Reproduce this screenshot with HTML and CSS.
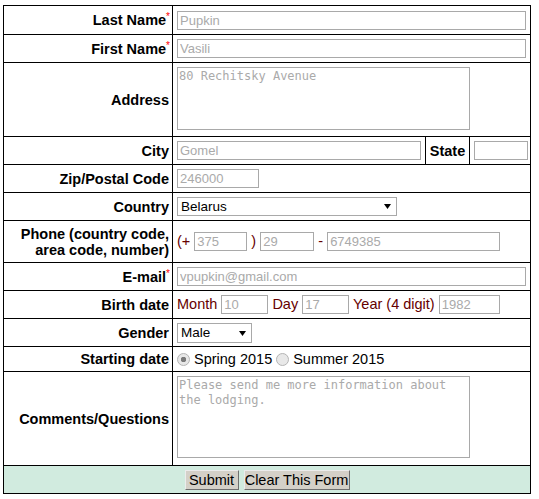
FILE: index.html
```html
<!DOCTYPE html>
<html>
<head>
<meta charset="utf-8">
<title>Registration form</title>
<link rel="stylesheet" href="styles.css">
</head>
<body>
<form class="form">
  <div class="row h29">
    <div class="lab"><span>Last Name<sup class="req">*</sup></span></div>
    <div class="val"><input class="txt w-full" placeholder="Pupkin"></div>
  </div>
  <div class="row h28">
    <div class="lab"><span>First Name<sup class="req">*</sup></span></div>
    <div class="val"><input class="txt w-full" placeholder="Vasili"></div>
  </div>
  <div class="row h74">
    <div class="lab"><span>Address</span></div>
    <div class="val top"><textarea class="area area-addr" placeholder="80 Rechitsky Avenue"></textarea></div>
  </div>
  <div class="row city h28">
    <div class="lab"><span>City</span></div>
    <div class="val cell-r"><input class="txt w-city" placeholder="Gomel"></div>
    <div class="state-lab cell-r">State</div>
    <div class="val state-val"><input class="txt w-state"></div>
  </div>
  <div class="row h28">
    <div class="lab"><span>Zip/Postal Code</span></div>
    <div class="val"><input class="txt w-zip" placeholder="246000"></div>
  </div>
  <div class="row h28">
    <div class="lab"><span>Country</span></div>
    <div class="val">
      <span class="sel w-country">
        <select><option>Belarus</option></select>
        <svg class="arrow" width="7" height="5" viewBox="0 0 7 5"><polygon points="0,0 7,0 3.5,5" fill="#000"/></svg>
      </span>
    </div>
  </div>
  <div class="row h42">
    <div class="lab"><span>Phone (country code,<br>area code, number)</span></div>
    <div class="val"><div class="line"><span class="mr">(+</span> <input class="txt w-cc" placeholder="375"> <span class="mr">)</span> <input class="txt w-ac" placeholder="29"> <span class="mr">-</span> <input class="txt w-num" placeholder="6749385"></div></div>
  </div>
  <div class="row h28">
    <div class="lab"><span>E-mail<sup class="req">*</sup></span></div>
    <div class="val"><input class="txt w-full" placeholder="vpupkin@gmail.com"></div>
  </div>
  <div class="row h28">
    <div class="lab"><span>Birth date</span></div>
    <div class="val"><div class="line"><span class="mr">Month</span> <input class="txt w-md" placeholder="10"> <span class="mr">Day</span> <input class="txt w-md" placeholder="17"> <span class="mr">Year (4 digit)</span> <input class="txt w-yr" placeholder="1982"></div></div>
  </div>
  <div class="row h28">
    <div class="lab"><span>Gender</span></div>
    <div class="val">
      <span class="sel w-gender">
        <select><option>Male</option><option>Female</option></select>
        <svg class="arrow" width="7" height="5" viewBox="0 0 7 5"><polygon points="0,0 7,0 3.5,5" fill="#000"/></svg>
      </span>
    </div>
  </div>
  <div class="row h25">
    <div class="lab"><span>Starting date</span></div>
    <div class="val radios">
      <label class="opt"><input type="radio" name="start" checked> Spring 2015</label>
      <label class="opt"><input type="radio" name="start"> Summer 2015</label>
    </div>
  </div>
  <div class="row h94">
    <div class="lab"><span>Comments/Questions</span></div>
    <div class="val top"><textarea class="area area-comm" placeholder="Please send me more information about the lodging."></textarea></div>
  </div>
  <div class="row foot">
    <button type="submit" class="btn btn-submit">Submit</button>
    <button type="reset" class="btn btn-clear">Clear This Form</button>
  </div>
</form>
</body>
</html>
```

FILE: styles.css
```css
* {
  box-sizing: border-box;
}

body {
  margin: 0;
  background: #fff;
  color: #000;
  font-family: "Liberation Sans", Arial, sans-serif;
  font-size: 14.5px;
}

.form {
  margin: 5px 0 0 3px;
  width: 528px;
  border: 1px solid #000;
}

.row {
  display: grid;
  grid-template-columns: 169px 1fr;
  border-bottom: 1px solid #000;
}

.row:last-child {
  border-bottom: 0;
}

.row.city {
  grid-template-columns: 169px 253px 44px 1fr;
}

.h29 { height: 29px; }
.h28 { height: 28px; }
.h25 { height: 25px; }
.h42 { height: 42px; }
.h74 { height: 74px; }
.h94 { height: 94px; }

.lab {
  border-right: 1px solid #000;
  display: flex;
  align-items: center;
  justify-content: flex-end;
  padding-right: 3px;
  font-weight: bold;
  text-align: right;
  line-height: 16px;
  white-space: nowrap;
}

.req {
  color: #ff0000;
  font-size: 10px;
  line-height: 0;
  vertical-align: 5px;
  margin-right: -1px;
  font-weight: normal;
}

.val {
  display: flex;
  align-items: center;
  padding: 0 4px;
  min-width: 0;
}

.val.top {
  align-items: flex-start;
  padding-top: 4px;
}

.cell-r {
  border-right: 1px solid #000;
}

.state-lab {
  display: flex;
  align-items: center;
  justify-content: center;
  font-weight: bold;
}

.state-val {
  padding: 0 2px 0 4px;
}

.line {
  white-space: nowrap;
  line-height: 19px;
}

.mr {
  color: #660000;
}

.txt {
  height: 19px;
  margin: 0;
  padding: 1px 2px;
  border: 1px solid #a9a9a9;
  background: #fff;
  color: #000;
  font: 13px "Liberation Sans", Arial, sans-serif;
  vertical-align: middle;
}

.txt::placeholder,
.area::placeholder {
  color: #aaa;
  opacity: 1;
}

.w-full { width: 100%; }
.w-city { width: 244px; }
.w-state { width: 54px; }
.w-zip { width: 82px; }
.w-cc { width: 53px; }
.w-ac { width: 54px; }
.w-num { width: 173px; }
.w-md { width: 47px; }
.w-yr { width: 61px; }

.area {
  margin: 0;
  padding: 1px;
  border: 1px solid #a9a9a9;
  width: 293px;
  font: 12px/15px "DejaVu Sans Mono", "Liberation Mono", monospace;
  color: #000;
  resize: none;
}

.area-addr { height: 63px; }
.area-comm { height: 82px; }

.sel {
  position: relative;
  display: inline-block;
}

.sel select {
  appearance: none;
  -webkit-appearance: none;
  width: 100%;
  margin: 0;
  padding: 0 3px;
  border: 1px solid #a9a9a9;
  border-radius: 0;
  background: #fff;
  color: #000;
  font: 13.5px "Liberation Sans", Arial, sans-serif;
  display: block;
}

.w-country { width: 220px; }
.w-country select { height: 19px; }
.w-gender { width: 75px; }
.w-gender select { height: 20px; }

.sel .arrow {
  position: absolute;
  right: 6px;
  top: 7px;
  pointer-events: none;
}

.w-gender .arrow {
  right: 6px;
  top: 8px;
}

.radios {
  gap: 4px;
}

.opt {
  display: inline-flex;
  align-items: center;
  gap: 4px;
  white-space: nowrap;
}

.opt input {
  appearance: none;
  -webkit-appearance: none;
  width: 13px;
  height: 13px;
  margin: 0;
  border: 1px solid #b4b4b4;
  border-radius: 50%;
  background: #e8e8e8;
}

.opt input:checked {
  background: radial-gradient(circle, #7a7a7a 0 2.5px, #e8e8e8 3px);
}

.foot {
  height: 27px;
  display: flex;
  align-items: center;
  justify-content: center;
  gap: 5px;
  background: #d1ebdf;
}

.btn {
  height: 20px;
  margin: 0;
  padding: 0;
  border: 1px solid;
  border-color: #ececec #6f6f6f #6f6f6f #ececec;
  background: #d4d0c8;
  color: #000;
  font: 14.5px "Liberation Sans", Arial, sans-serif;
}

.btn-submit { width: 54px; }
.btn-clear { width: 106px; }
```
